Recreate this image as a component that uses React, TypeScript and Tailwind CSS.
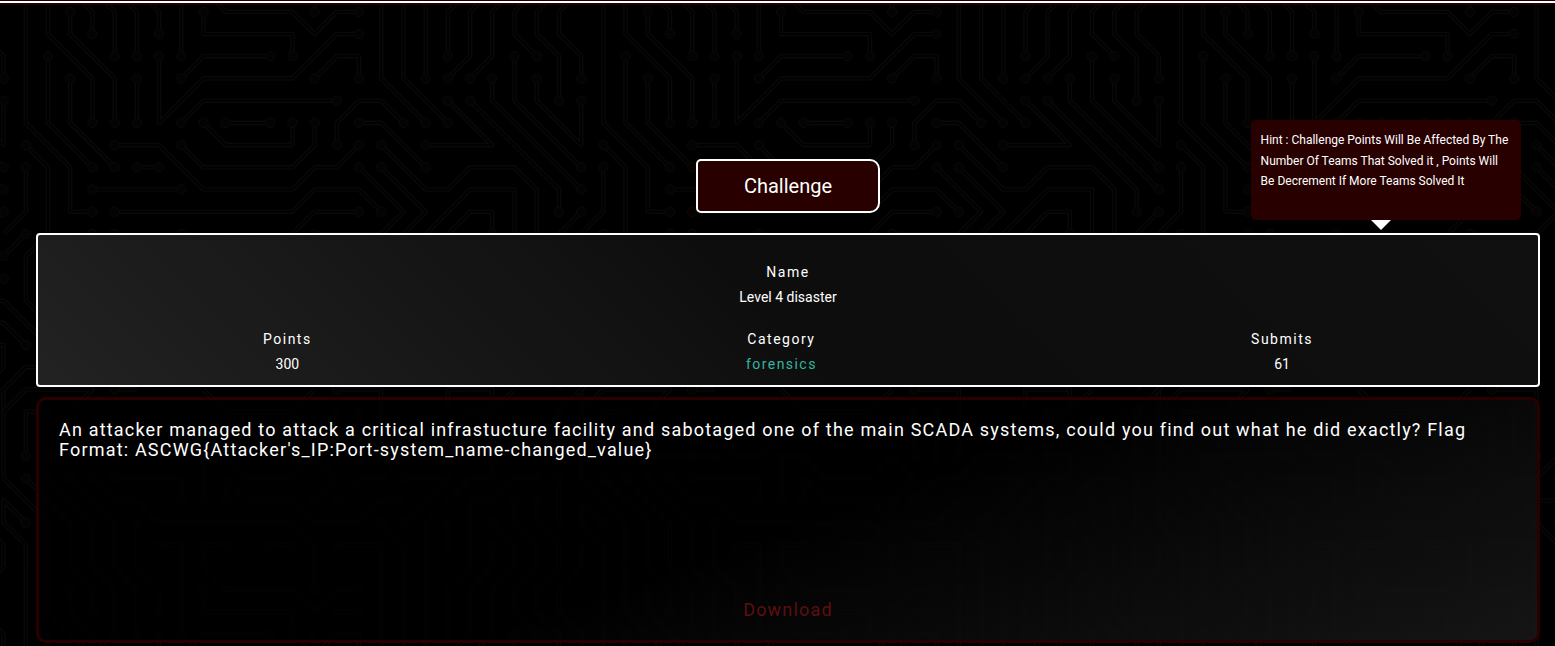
import React from "react";

const CELL = 22.215;

type Trace = { nodes: "s" | "e" | "b" | "n"; pts: number[] };

const t = (nodes: Trace["nodes"], ...pts: number[]): Trace => ({ nodes, pts });

const TRACES: Trace[] = [
  t("e", 0, -1, 0, 5, 2, 7, 2, 9, 3, 9),
  t("e", 1, -1, 1, 1, 3, 3, 3, 5),
  t("b", 2, 0, 2, 1, 4, 3, 4, 5),
  t("e", 2, -1, 3, 0, 3, 1),
  t("e", 3, -1, 4, 0, 4, 2),
  t("e", 4, -1, 5, 0, 5, 2),
  t("e", 5, -1, 6, 0, 6, 1),
  t("e", 7, -1, 7, 2),
  t("b", 1, 2, 1, 5, 3, 7),
  t("b", 2, 3, 2, 5, 4, 7),
  t("b", 5, 3, 5, 5),
  t("b", 6, 2, 6, 5, 8, 3, 12, 3, 14, 1, 15, 1),
  t("s", 0, 6, 1, 7, 1, 10, 0, 11, 0, 13, 2, 15),
  t("s", 0, 7, 0, 9, -1, 10),
  t("b", 4, 6, 6, 6, 8, 8, 12, 8, 13, 7, 14, 7, 15, 6),
  t("b", 5, 7, 6, 7),
  t("b", 3, 8, 7, 8),
  t("b", 4, 9, 12, 9, 13, 8, 15, 8, 16, 9),
  t("b", 8, 0, 8, 1, 12, 1, 12, 2),
  t("e", 8, -1, 9, 0, 12, 0, 13, 1, 14, 0, 15, 0),
  t("e", 13, -1, 13, 0),
  t("b", 7, 3, 8, 2, 11, 2),
  t("b", 7, 5, 8, 4, 14, 4),
  t("b", 8, 5, 9, 6, 12, 6, 12, 5),
  t("b", 9, 5, 11, 5),
  t("b", 7, 6, 8, 7, 12, 7, 13, 6, 13, 5),
  t("b", 13, 3, 14, 2, 15, 2, 15, 3),
  t("b", 14, 6, 14, 5, 15, 4, 16, 4, 17, 5),
  t("b", 15, 5, 16, 5, 18, 7),
  t("e", 16, -1, 16, 3, 18, 5),
  t("e", 17, -1, 17, 3, 19, 5),
  t("e", 18, -1, 18, 3),
  t("e", 20, -1, 19, 0, 19, 2),
  t("e", 21, -1, 20, 0, 20, 2, 19, 3),
  t("e", 22, -1, 21, 0, 21, 2, 20, 3),
  t("e", 23, -1, 22, 0, 22, 1, 23, 2),
  t("e", 24, -1, 23, 0, 23, 1, 24, 2, 24, 4),
  t("e", 25, -1, 24, 0, 24, 1, 25, 2, 25, 3),
  t("b", 19, 4, 21, 6, 18, 6),
  t("b", 20, 4, 24, 8, 24, 9),
  t("b", 21, 3, 21, 4, 25, 8),
  t("b", 22, 2, 22, 4, 25, 7),
  t("b", 23, 3, 23, 4, 25, 6, 25, 4),
  t("s", 16, 6, 18, 8, 19, 8, 20, 7, 22, 7, 23, 8, 23, 10),
  t("s", 15, 7, 17, 9, 16, 10),
  t("s", 16, 7, 18, 9, 17, 10),
  t("e", 12, 10, 13, 9, 15, 9),
  t("n", 18, 10, 20, 8, 22, 8, 22, 10),
  t("e", 19, 10, 20, 9, 21, 9, 21, 10),
  t("s", 25, 9, 24, 10),
  t("b", 3, 10, 3, 11),
  t("b", 4, 10, 4, 11),
  t("b", 7, 10, 7, 11),
  t("s", 13, 10, 16, 10),
  t("b", 0, 10, -1, 11),
  t("e", -3, 12, -1, 12),
  t("n", -2, 13, -1, 13, 1, 15),
  t("e", -2, 14, -1, 14, 0, 15),
  t("n", -2, 15, -1, 15, -1, 16, -2, 17),
  t("n", -2, 18, 0, 16, 2, 16),
  t("n", -1, 20, -1, 18, 0, 17, 3, 17, 2, 18),
  t("b", 0, 20, 0, 18, 1, 18),
  t("b", 3, 21, 4, 22, 5, 22, 6, 23, 12, 23, 13, 24, 13, 26),
  t("b", 4, 21, 7, 21, 7, 22),
  t("b", 8, 22, 8, 20, 9, 20, 10, 21, 12, 21, 13, 20, 14, 21, 13, 22),
  t("s", 9, 22, 9, 21, 10, 22, 12, 22, 13, 23, 15, 23, 16, 22, 17, 22),
  t("s", 14, 22, 15, 21, 16, 21, 17, 20, 19, 20, 22, 17),
  t("s", 16, 23, 17, 24, 17, 25),
  t("s", 5, 23, 5, 25),
  t("s", 6, 24, 7, 24, 7, 25),
  t("s", 9, 24, 8, 24, 8, 25),
  t("b", 11, 24, 12, 24),
  t("s", 14, 24, 16, 24, 16, 25),
  t("n", 8, 17, 9, 18, 12, 18, 13, 17),
  t("s", 14, 17, 16, 17, 16, 18),
  t("s", 4, 17, 5, 17),
  t("e", 3, 19, 5, 19, 6, 20, 7, 20, 8, 19, 13, 19, 14, 18, 14, 20),
  t("b", 15, 18, 15, 20),
  t("b", 4, 20, 5, 20),
  t("e", 16, 17, 16, 20),
  t("s", 20, 18, 21, 18, 21, 17, 19, 17, 19, 18),
  t("s", 20, 20, 21, 20, 21, 21, 20, 21, 18, 23, 18, 25),
  t("b", 17, 21, 19, 21, 17, 23),
  t("b", 19, 23, 19, 24),
  t("s", 23, 21, 22, 21, 21, 22, 20, 22, 20, 25),
  t("s", 21, 23, 22, 24, 22, 25),
  t("s", 21, 24, 21, 25),
  t("s", 22, 22, 22, 23, 23, 24, 23, 25),
  t("s", 23, 22, 23, 23, 24, 24, 24, 25),
  t("s", 24, 21, 24, 23, 25, 24, 25, 25),
  t("s", 26, 23, 25, 22, 25, 23, 26, 24, 26, 25),
  t("n", 26, 16, 25, 17, 25, 21, 27, 23, 27, 25),
  t("s", 26, 21, 28, 23, 28, 25),
  t("s", 27, 21, 29, 23, 29, 25),
  t("s", 28, 21, 30, 23, 30, 25),
  t("e", 21, 19, 22, 19, 23, 20),
  t("b", 24, 20, 24, 18),
  t("b", 27, 20, 30, 20),
];

const toPath = (pts: number[]) => {
  let d = "";
  for (let i = 0; i < pts.length; i += 2) {
    d += `${i ? "L" : "M"}${(pts[i] * CELL).toFixed(1)} ${(pts[i + 1] * CELL).toFixed(1)}`;
  }
  return d;
};

const ALL_LINES = TRACES.map((x) => toPath(x.pts)).join("");

const NODES: [number, number][] = [];
TRACES.forEach(({ nodes, pts }) => {
  if (nodes === "s" || nodes === "b") NODES.push([pts[0], pts[1]]);
  if (nodes === "e" || nodes === "b") NODES.push([pts[pts.length - 2], pts[pts.length - 1]]);
});

function CircuitBackground() {
  const size = CELL * 26;
  return (
    <svg className="absolute inset-0 h-full w-full" aria-hidden="true">
      <defs>
        <g id="circuit-tile" fill="none" strokeLinejoin="round">
          <path d={ALL_LINES} stroke="#090909" strokeWidth="4.6" />
          <path d={ALL_LINES} stroke="#010101" strokeWidth="1.8" />
          {NODES.map(([c, r], i) => (
            <circle key={i} cx={c * CELL} cy={r * CELL} r="4.7" fill="#040302" stroke="#0b0a09" strokeWidth="1" />
          ))}
        </g>
      </defs>
      {[-1, 0, 1, 2].map((i) =>
        [0, 1].map((j) => (
          <use key={`${i}-${j}`} href="#circuit-tile" x={25.8 + i * size} y={11.8 + j * size} />
        )),
      )}
    </svg>
  );
}

function Stat({ label, value, accent }: { label: string; value: string; accent?: boolean }) {
  return (
    <div className="flex flex-col items-center">
      <span className="h-[25px] leading-[25px] tracking-[1.5px]">{label}</span>
      <span className={accent ? "h-[25px] leading-[25px] tracking-[1.45px] text-[#35b5a0]" : "h-[25px] leading-[25px]"}>
        {value}
      </span>
    </div>
  );
}

export default function App() {
  return (
    <div className="relative h-[646px] overflow-hidden bg-black font-['Roboto',sans-serif] text-white">
      <CircuitBackground />
      <div className="relative flex h-full flex-col">
        <header className="h-[5px] shrink-0 border-b-2 border-[#260003] bg-[#1c0104] pt-px">
          <div className="h-[2px] bg-white" />
        </header>

        <main className="flex flex-col pl-[36px] pr-[15px]">
          <div className="relative flex h-[228px] items-end justify-center pb-5">
            <h1 className="flex h-[54px] w-[184px] items-center justify-center rounded-l-[5px] rounded-r-[10px] border-2 border-white bg-[#280000] text-[20px]">
              Challenge
            </h1>
            <aside className="absolute right-[19px] top-[115px] h-[100px] w-[270px] rounded-[5px] bg-[#280000] pl-[9.6px] pt-[10px] text-[12px] leading-[20.5px]">
              <p>
                Hint : Challenge Points Will Be Affected By The
                <br />
                Number Of Teams That Solved it , Points Will
                <br />
                Be Decrement If More Teams Solved It
              </p>
              <span className="absolute left-[120px] top-full border-x-[10px] border-t-[10px] border-x-transparent border-t-white" />
            </aside>
          </div>

          <section className="h-[154px] rounded-[4px] border-2 border-white bg-[linear-gradient(45deg,#222222_0%,#0d0d0d_50%,#101010_100%)] pt-[25px] text-[14px]">
            <Stat label="Name" value="Level 4 disaster" />
            <div className="mt-[17px] flex justify-between pl-[225px] pr-[225px]">
              <Stat label="Points" value="300" />
              <Stat label="Category" value="forensics" accent />
              <Stat label="Submits" value="61" />
            </div>
          </section>

          <section className="mt-[10px] flex h-[246px] flex-col items-center justify-between rounded-[10px] border-[3px] border-[#280000] bg-[linear-gradient(160deg,rgba(0,0,0,0.75)_0%,rgba(0,0,0,0.75)_50%,rgba(24,24,24,0.85)_100%)] px-5 pb-[20px] pt-[20px]">
            <p className="w-full text-[18px] leading-[20px] tracking-[1.19px]">
              An attacker managed to attack a critical infrastucture facility and sabotaged one of the main SCADA
              systems, could you find out what he did exactly? Flag Format:
              ASCWG&#123;Attacker's_IP:Port-system_name-changed_value&#125;
            </p>
            <a className="text-[18px] leading-[20px] tracking-[1.2px] text-[#5c0f0f]">Download</a>
          </section>
        </main>
      </div>
    </div>
  );
}
